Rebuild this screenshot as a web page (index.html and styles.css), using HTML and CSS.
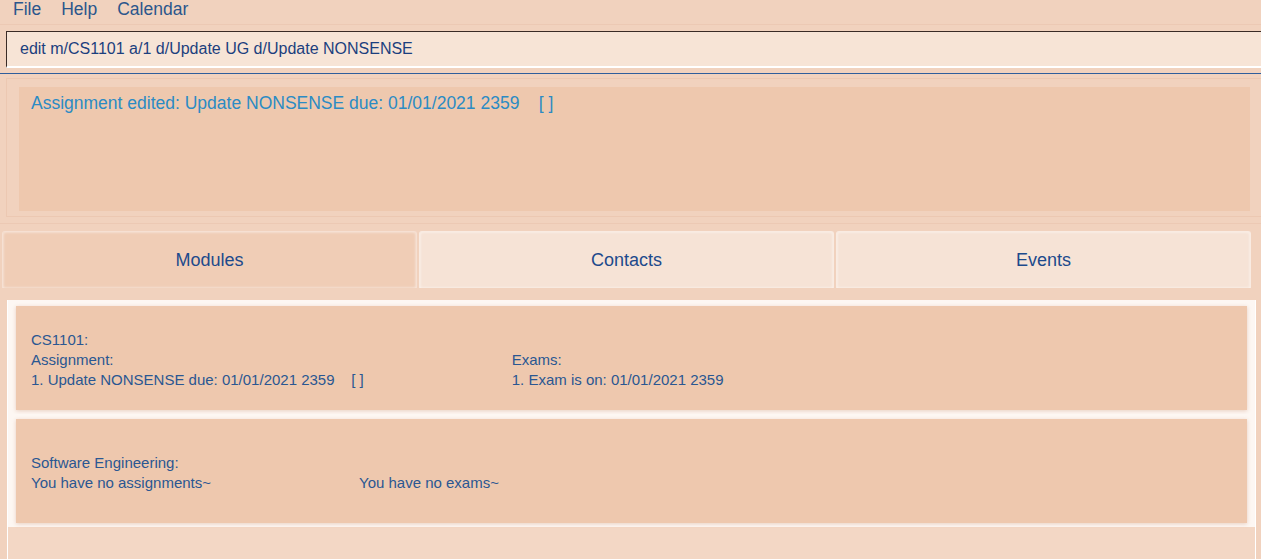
FILE: index.html
```html
<!DOCTYPE html>
<html>
<head>
<meta charset="utf-8">
<link rel="stylesheet" href="styles.css">
</head>
<body>
<div class="app">
  <div class="menubar">
    <span class="menu-item">File</span>
    <span class="menu-item">Help</span>
    <span class="menu-item">Calendar</span>
  </div>
  <div class="command">edit m/CS1101 a/1 d/Update UG d/Update NONSENSE</div>
  <div class="divider"></div>
  <div class="result-outer">
    <div class="result">Assignment edited: Update NONSENSE due: 01/01/2021 2359    [ ]</div>
  </div>
  <div class="pane-line"></div>
  <div class="tabs">
    <div class="tab selected">Modules</div>
    <div class="tab">Contacts</div>
    <div class="tab">Events</div>
  </div>
  <div class="list">
    <div class="cell">
      <div class="card">
        <div class="row">
          <div class="col">
            <div>CS1101:</div>
            <div>Assignment:</div>
            <div class="pre">1. Update NONSENSE due: 01/01/2021 2359    [ ]</div>
          </div>
          <div class="col">
            <div>Exams:</div>
            <div>1. Exam is on: 01/01/2021 2359</div>
          </div>
        </div>
      </div>
    </div>
    <div class="cell second">
      <div class="card">
        <div class="row">
          <div class="col">
            <div>Software Engineering:</div>
            <div>You have no assignments~</div>
          </div>
          <div class="col">
            <div>You have no exams~</div>
          </div>
        </div>
      </div>
    </div>
  </div>
</div>
</body>
</html>
```

FILE: styles.css
```css
html, body {
  margin: 0;
  padding: 0;
}
body {
  background: #f1d2be;
  width: 1261px;
  height: 559px;
  overflow: hidden;
  font-family: "Liberation Sans", Arial, sans-serif;
}
.app {
  display: flex;
  flex-direction: column;
  height: 559px;
}
.menubar {
  height: 25px;
  border-bottom: 1px solid #ecc9b4;
  display: flex;
  align-items: flex-start;
  padding-left: 13px;
  gap: 20px;
  font-size: 17.5px;
  line-height: 18px;
  color: #2b568c;
  box-sizing: border-box;
  flex-shrink: 0;
}
.command {
  margin: 6px 0 0 6px;
  height: 34px;
  border-top: 1px solid #3a2b26;
  border-left: 1px solid #3a2b26;
  border-bottom: 2px solid #ffffff;
  background: #f7e4d6;
  box-sizing: content-box;
  padding-left: 13px;
  font-size: 16px;
  line-height: 34px;
  color: #1c3f7e;
  flex-shrink: 0;
}
.divider {
  margin-top: 5px;
  height: 1px;
  background: #2f5e9c;
  flex-shrink: 0;
}
.result-outer {
  margin: 4px 0 0 6px;
  border: 1px solid #ecc8b2;
  border-right: none;
  height: 139px;
  padding: 8px 0 0 12px;
  box-sizing: border-box;
  flex-shrink: 0;
}
.result {
  width: 1231px;
  height: 124px;
  background: #eec8ae;
  box-sizing: border-box;
  padding: 6px 12px;
  font-size: 17.5px;
  line-height: 20px;
  color: #2b8bc4;
  white-space: pre;
}
.pane-line {
  margin-top: 6px;
  height: 1px;
  background: #ecc9b4;
  flex-shrink: 0;
}
.tabs {
  margin-top: 7px;
  display: flex;
  gap: 2px;
  padding-left: 2px;
  flex-shrink: 0;
}
.tab {
  width: 415px;
  height: 57px;
  box-sizing: border-box;
  border: 1px solid #f9ebe2;
  border-bottom: none;
  border-radius: 3px 3px 0 0;
  background: #f6e3d6;
  box-shadow: inset 0 0 3px rgba(255,255,255,0.7);
  display: flex;
  align-items: center;
  justify-content: center;
  font-size: 18px;
  color: #1d4a8c;
}
.tab.selected {
  background: #f0cdb6;
  border-color: #f6e0d3;
}
.list {
  margin: 12px 0 0 7px;
  width: 1249px;
  flex: 1;
  background: #f3d7c5;
  border-left: 1px solid #ffffff;
  border-right: 1px solid #ffffff;
  box-sizing: border-box;
}
.cell {
  background: #fdf7f3;
  padding: 6px 8px 4px 8px;
}
.cell.second {
  padding-top: 5px;
}
.card {
  height: 104px;
  background: #eec8ae;
  box-shadow: 0 1px 4px rgba(210,160,130,0.45);
  display: flex;
  align-items: center;
  padding: 3px 0 0 15px;
  box-sizing: border-box;
}
.row {
  display: flex;
  align-items: flex-end;
  column-gap: 148px;
}
.col {
  display: flex;
  flex-direction: column;
  font-size: 15px;
  line-height: 20px;
  color: #2a5792;
}
.pre {
  white-space: pre;
}
```
